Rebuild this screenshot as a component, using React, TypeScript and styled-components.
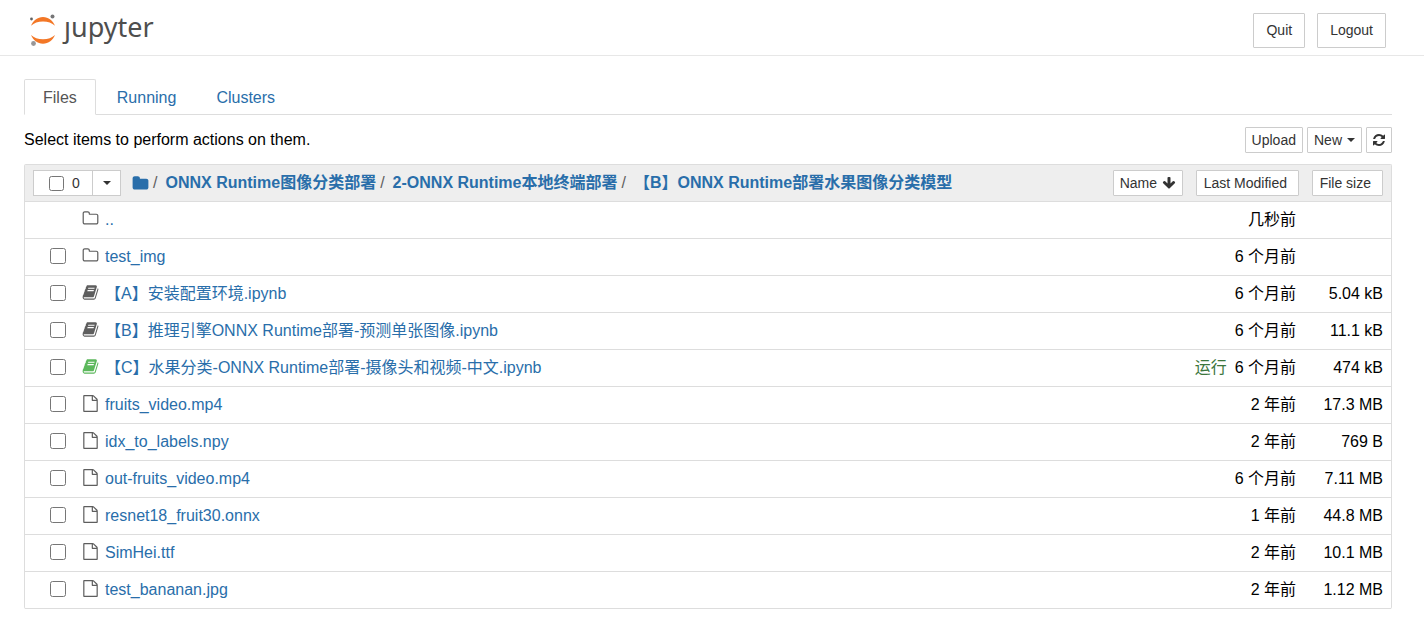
import React from "react";
import styled, { createGlobalStyle } from "styled-components";

const GlobalStyle = createGlobalStyle`
  * { box-sizing: border-box; }
  body {
    margin: 0;
    background: #fff;
    color: #000;
    font: 16px/22px "Liberation Sans", Arial, "Noto Sans CJK SC", sans-serif;
  }
  button { font-family: inherit; }
  svg { display: block; flex: none; }
`;

const Header = styled.header`
  display: flex;
  align-items: center;
  justify-content: space-between;
  height: 56px;
  padding: 0 38px 0 28px;
  border-bottom: 1px solid #e7e7e7;
`;

const Brand = styled.a`
  display: flex;
  align-items: center;
  gap: 8px;
  color: #4e4e4e;
  text-decoration: none;
`;

const BrandName = styled.span`
  padding-bottom: 2px;
  font: 27px/36px "Noto Sans", "Open Sans", sans-serif;
`;

const HeaderActions = styled.div`
  display: flex;
  gap: 12px;
  padding-top: 6px;
`;

const Button = styled.button`
  display: inline-flex;
  align-items: center;
  gap: 5px;
  height: 26px;
  padding: 0 6px;
  border: 1px solid #ccc;
  border-radius: 1px;
  background: #fff;
  color: #333;
  font-size: 14px;
  line-height: 20px;
  white-space: nowrap;
`;

const HeaderButton = styled(Button)`
  height: 35px;
  padding: 0 12px 2px;
`;

const IconButton = styled(Button)`
  padding: 0 5px;
`;

const SortButton = styled(Button)`
  padding: 0 11px 0 7px;
`;

const Main = styled.main`
  padding: 23px 32px 29px 24px;
`;

const Tabs = styled.nav`
  display: flex;
  gap: 2px;
  height: 36px;
  border-bottom: 1px solid #ddd;
`;

const Tab = styled.a<{ $active?: boolean }>`
  height: 36px;
  padding: 7px 18px;
  border: 1px solid ${(p) => (p.$active ? "#ddd" : "transparent")};
  border-bottom-color: ${(p) => (p.$active ? "#fff" : "transparent")};
  border-radius: 2px 2px 0 0;
  color: ${(p) => (p.$active ? "#555" : "#296eaa")};
  text-decoration: none;
`;

const Toolbar = styled.div`
  display: flex;
  align-items: center;
  justify-content: space-between;
  height: 49px;
`;

const ToolbarActions = styled.div`
  display: flex;
  gap: 4px;
`;

const FileTable = styled.table`
  width: 100%;
  border: 1px solid #ddd;
  border-bottom: 0;
  border-radius: 2px;
  border-spacing: 0;
`;

const HeadCell = styled.th<{ $width?: number }>`
  width: ${(p) => (p.$width ? `${p.$width}px` : "auto")};
  height: 37px;
  padding: 0 8px 0 ${(p) => (p.$width ? 0 : 8)}px;
  border-bottom: 1px solid #ddd;
  background: #eee;
  font-weight: 400;
  text-align: right;
`;

const HeadBar = styled.div`
  display: flex;
  align-items: center;
  justify-content: flex-end;
`;

const Selector = styled.div`
  display: flex;
  height: 26px;
  border: 1px solid #ccc;
  background: #fff;
`;

const SelectAll = styled.label`
  display: flex;
  align-items: center;
  gap: 8px;
  width: 59px;
  padding-left: 15px;
  border-right: 1px solid #ccc;
  color: #333;
  font-size: 14px;
`;

const SelectMenu = styled.button`
  display: flex;
  align-items: center;
  justify-content: center;
  width: 27px;
  padding: 0;
  border: 0;
  background: none;
`;

const Caret = styled.span`
  border: 4px solid transparent;
  border-top-color: #333;
  border-bottom: 0;
`;

const Checkbox = styled.input<{ $small?: boolean }>`
  display: block;
  width: ${(p) => (p.$small ? 15 : 16)}px;
  height: ${(p) => (p.$small ? 15 : 16)}px;
  margin: 0;
`;

const Crumbs = styled.nav`
  display: flex;
  flex: 1;
  align-items: center;
  padding-left: 11px;
  white-space: nowrap;
`;

const Crumb = styled.a`
  color: #296eaa;
  font-weight: 700;
  text-decoration: none;
`;

const Slash = styled.span`
  padding: 0 8px 0 4px;
  color: #5e5e5e;
`;

const Cell = styled.td<{ $align?: string }>`
  height: 37px;
  padding: 0 8px 0 0;
  border-bottom: 1px solid #ddd;
  text-align: ${(p) => p.$align ?? "left"};
  white-space: nowrap;
`;

const CheckCell = styled(Cell)`
  width: 57px;
  padding: 0 0 2px 25px;
`;

const DateCell = styled(Cell)`
  padding-right: 11px;
`;

const Entry = styled.div`
  display: flex;
  align-items: center;
`;

const EntryIcon = styled.span<{ $running?: boolean }>`
  display: flex;
  width: 23px;
  padding-bottom: 3px;
  color: ${(p) => (p.$running ? "#5cb85c" : "#5e5e5e")};
`;

const EntryLink = styled.a`
  color: #296eaa;
  text-decoration: none;
`;

const Running = styled.span`
  margin-right: 8px;
  color: #3c763d;
`;

const ICONS = {
  folderOpen:
    "M1600 1312v-704q0-40-28-68t-68-28h-704q-40 0-68-28t-28-68v-64q0-40-28-68t-68-28h-320q-40 0-68 28t-28 68v960q0 40 28 68t68 28h1216q40 0 68-28t28-68zm128-704v704q0 92-66 158t-158 66h-1216q-92 0-158-66t-66-158v-960q0-92 66-158t158-66h320q92 0 158 66t66 158v32h672q92 0 158 66t66 158z",
  folder:
    "M1728 608v704q0 92-66 158t-158 66h-1216q-92 0-158-66t-66-158v-960q0-92 66-158t158-66h320q92 0 158 66t66 158v32h672q92 0 158 66t66 158z",
  file: "M1596 380q28 28 48 76t20 88v1152q0 40-28 68t-68 28h-1344q-40 0-68-28t-28-68v-1600q0-40 28-68t68-28h896q40 0 88 20t76 48zm-444-244v376h376q-10-29-22-41l-313-313q-12-12-41-22zm384 1528v-1024h-416q-40 0-68-28t-28-68v-416h-768v1536h1280z",
  book: "M1703 478q40 57 18 129l-275 906q-19 64-76.500 107.500t-122.500 43.500h-923q-77 0-148.500-53.500t-99.500-131.500q-24-67-2-127 0-4 3-27t4-37q1-8-3-21.500t-3-19.500q2-11 8-21t16.500-23.500 16.500-23.500q23-38 45-91.500t30-91.500q3-10 .5-30t-.5-28q3-11 17-28t17-23q21-36 42-92t25-90q1-9-2.500-32t.5-28q4-13 22-30.500t22-22.500q19-26 42.500-84.500t27.500-96.500q1-8-3-25.500t-2-26.500q2-8 9-18t18-23 17-21q8-12 16.500-30.500t15-35 16-36 19.500-32 26.500-23.500 36-11.500 47.500 5.500l-1 3q38-9 51-9h761q74 0 114 56t18 130l-274 906q-36 119-71.500 153.500t-128.500 34.500h-869q-27 0-38 15-11 16-1 43 24 70 144 70h923q29 0 56-15.500t35-41.500l300-987q7-22 5-57 38 15 59 43zm-1064 2q-4 13 2 22.500t20 9.500h608q13 0 25.500-9.500t16.500-22.500l21-64q4-13-2-22.500t-20-9.500h-608q-13 0-25.500 9.500t-16.500 22.500zm-83 256q-4 13 2 22.500t20 9.500h608q13 0 25.500-9.500t16.500-22.500l21-64q4-13-2-22.500t-20-9.500h-608q-13 0-25.500 9.500t-16.500 22.500z",
  refresh:
    "M1639 1056q0 5-1 7-64 268-268 434.500t-478 166.500q-146 0-282.500-55t-243.500-157l-129 129q-19 19-45 19t-45-19-19-45v-448q0-26 19-45t45-19h448q26 0 45 19t19 45-19 45l-137 137q71 66 161 102t187 36q134 0 250-65t186-179q11-17 53-117 8-23 30-23h192q13 0 22.500 9.500t9.500 22.500zm25-800v448q0 26-19 45t-45 19h-448q-26 0-45-19t-19-45 19-45l138-138q-148-137-349-137-134 0-250 65t-186 179q-11 17-53 117-8 23-30 23h-199q-13 0-22.500-9.500t-9.500-22.500v-7q65-268 270-434.500t480-166.500q146 0 284 55.500t245 156.500l130-129q19-19 45-19t45 19 19 45z",
  arrowDown:
    "M1675 832q0 53-37 90l-651 652q-39 37-91 37-53 0-90-37l-651-652q-38-36-38-90 0-53 38-91l74-75q39-37 91-37 53 0 90 37l294 294v-704q0-52 38-90t90-38h128q52 0 90 38t38 90v704l294-294q37-37 90-37 52 0 91 37l75 75q37 39 37 91z",
};

type IconName = keyof typeof ICONS;

const Icon = ({ name, size }: { name: IconName; size: number }) => (
  <svg width={size} height={size} viewBox="0 0 1792 1792" fill="currentColor" aria-hidden="true">
    <path d={ICONS[name]} />
  </svg>
);

const LogoMark = () => (
  <svg width="28" height="36" viewBox="0 0 28 36" aria-hidden="true">
    <path d="M3 15.700C5 10.700 9.500 7 15 7s10 3.700 12 8.700C24 12.900 20 11.400 15 11.400S6 12.900 3 15.700Z" fill="#f37726" />
    <path d="M3 25c2 5 6.500 8.700 12 8.700s10-3.700 12-8.700c-3 2.800-7 4.300-12 4.300S6 27.800 3 25Z" fill="#f37726" />
    <circle cx="24.500" cy="6.500" r="2" fill="#767677" />
    <circle cx="3.500" cy="9" r="1.400" fill="#616262" />
    <circle cx="5.500" cy="33.500" r="2.400" fill="#989798" />
  </svg>
);

interface FileEntry {
  name: string;
  icon: IconName;
  modified: string;
  size?: string;
  running?: boolean;
  parent?: boolean;
}

const FILES: FileEntry[] = [
  { name: "..", icon: "folderOpen", modified: "几秒前", parent: true },
  { name: "test_img", icon: "folderOpen", modified: "6 个月前" },
  { name: "【A】安装配置环境.ipynb", icon: "book", modified: "6 个月前", size: "5.04 kB" },
  { name: "【B】推理引擎ONNX Runtime部署-预测单张图像.ipynb", icon: "book", modified: "6 个月前", size: "11.1 kB" },
  { name: "【C】水果分类-ONNX Runtime部署-摄像头和视频-中文.ipynb", icon: "book", modified: "6 个月前", size: "474 kB", running: true },
  { name: "fruits_video.mp4", icon: "file", modified: "2 年前", size: "17.3 MB" },
  { name: "idx_to_labels.npy", icon: "file", modified: "2 年前", size: "769 B" },
  { name: "out-fruits_video.mp4", icon: "file", modified: "6 个月前", size: "7.11 MB" },
  { name: "resnet18_fruit30.onnx", icon: "file", modified: "1 年前", size: "44.8 MB" },
  { name: "SimHei.ttf", icon: "file", modified: "2 年前", size: "10.1 MB" },
  { name: "test_bananan.jpg", icon: "file", modified: "2 年前", size: "1.12 MB" },
];

const PATH = ["ONNX Runtime图像分类部署", "2-ONNX Runtime本地终端部署", "【B】ONNX Runtime部署水果图像分类模型"];

export default function App() {
  return (
    <>
      <GlobalStyle />
      <Header>
        <Brand href="#" aria-label="jupyter">
          <LogoMark />
          <BrandName>ȷupyter</BrandName>
        </Brand>
        <HeaderActions>
          <HeaderButton>Quit</HeaderButton>
          <HeaderButton>Logout</HeaderButton>
        </HeaderActions>
      </Header>
      <Main>
        <Tabs>
          <Tab href="#files" $active>Files</Tab>
          <Tab href="#running">Running</Tab>
          <Tab href="#clusters">Clusters</Tab>
        </Tabs>
        <Toolbar>
          <span>Select items to perform actions on them.</span>
          <ToolbarActions>
            <Button>Upload</Button>
            <Button>New <Caret /></Button>
            <IconButton aria-label="Refresh"><Icon name="refresh" size={14} /></IconButton>
          </ToolbarActions>
        </Toolbar>
        <FileTable>
          <thead>
            <tr>
              <HeadCell colSpan={2}>
                <HeadBar>
                  <Selector>
                    <SelectAll>
                      <Checkbox type="checkbox" $small aria-label="Select all" />
                      0
                    </SelectAll>
                    <SelectMenu aria-label="Select by type"><Caret /></SelectMenu>
                  </Selector>
                  <Crumbs aria-label="Folder path">
                    <Crumb href="#root" aria-label="Home folder"><Icon name="folder" size={17} /></Crumb>
                    {PATH.map((part) => (
                      <React.Fragment key={part}>
                        <Slash>/</Slash>
                        <Crumb href="#folder">{part}</Crumb>
                      </React.Fragment>
                    ))}
                  </Crumbs>
                  <Button>Name <Icon name="arrowDown" size={14} /></Button>
                </HeadBar>
              </HeadCell>
              <HeadCell $width={116}>
                <HeadBar><SortButton>Last Modified</SortButton></HeadBar>
              </HeadCell>
              <HeadCell $width={84}>
                <HeadBar><SortButton>File size</SortButton></HeadBar>
              </HeadCell>
            </tr>
          </thead>
          <tbody>
            {FILES.map((file) => (
              <tr key={file.name}>
                <CheckCell>
                  {!file.parent && <Checkbox type="checkbox" aria-label={file.name} />}
                </CheckCell>
                <Cell>
                  <Entry>
                    <EntryIcon $running={file.running}><Icon name={file.icon} size={17} /></EntryIcon>
                    <EntryLink href="#open">{file.name}</EntryLink>
                  </Entry>
                </Cell>
                <DateCell $align="right">
                  {file.running && <Running>运行</Running>}
                  {file.modified}
                </DateCell>
                <Cell $align="right">{file.size}</Cell>
              </tr>
            ))}
          </tbody>
        </FileTable>
      </Main>
    </>
  );
}
